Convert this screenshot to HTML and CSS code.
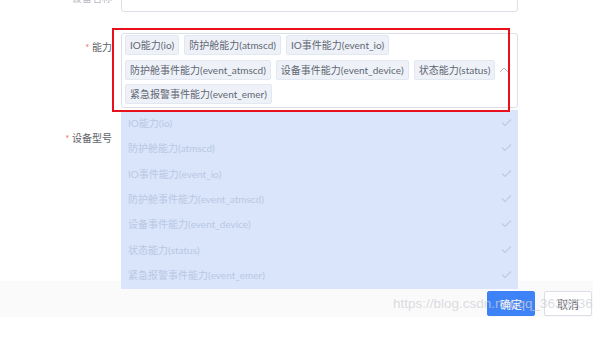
FILE: index.html
```html
<!DOCTYPE html>
<html lang="zh-CN">
<head>
  <meta charset="UTF-8" />
  <meta name="viewport" content="width=device-width, initial-scale=1.0"/>
  <title>编辑设备</title>
  <link rel="stylesheet" href="styles.css">
</head>
<body>

<div class="dialog">
  <div class="dialog-body">
    <form class="form">
      <div class="form-item first">
        <label class="form-label"><span class="req">*</span> 设备名称</label>
        <div class="form-control">
          <div class="input"></div>
        </div>
      </div>

      <div class="form-item">
        <label class="form-label"><span class="req">*</span> 能力</label>
        <div class="form-control">
          <div class="select">
            <div class="tags">
              <span class="tag">IO能力(io)</span>
              <span class="tag">防护舱能力(atmscd)</span>
              <span class="tag">IO事件能力(event_io)</span>
              <span class="tag">防护舱事件能力(event_atmscd)</span>
              <span class="tag">设备事件能力(event_device)</span>
              <span class="tag">状态能力(status)</span>
              <span class="tag">紧急报警事件能力(event_emer)</span>
            </div>
            <svg class="arrow" width="10" height="7" viewBox="0 0 10 7">
              <polyline points="1,6 5,2 9,6" fill="none" stroke="#b4b8c0" stroke-width="1"/>
            </svg>
          </div>

          <!-- dropdown popper -->
          <ul class="dropdown">
            <li>IO能力(io)<svg class="check" width="11" height="9" viewBox="0 0 11 9"><polyline points="1,4.5 4,7.5 10,1.5" fill="none" stroke="#bccae6" stroke-width="1.2"/></svg></li>
            <li>防护舱能力(atmscd)<svg class="check" width="11" height="9" viewBox="0 0 11 9"><polyline points="1,4.5 4,7.5 10,1.5" fill="none" stroke="#bccae6" stroke-width="1.2"/></svg></li>
            <li>IO事件能力(event_io)<svg class="check" width="11" height="9" viewBox="0 0 11 9"><polyline points="1,4.5 4,7.5 10,1.5" fill="none" stroke="#bccae6" stroke-width="1.2"/></svg></li>
            <li>防护舱事件能力(event_atmscd)<svg class="check" width="11" height="9" viewBox="0 0 11 9"><polyline points="1,4.5 4,7.5 10,1.5" fill="none" stroke="#bccae6" stroke-width="1.2"/></svg></li>
            <li>设备事件能力(event_device)<svg class="check" width="11" height="9" viewBox="0 0 11 9"><polyline points="1,4.5 4,7.5 10,1.5" fill="none" stroke="#bccae6" stroke-width="1.2"/></svg></li>
            <li>状态能力(status)<svg class="check" width="11" height="9" viewBox="0 0 11 9"><polyline points="1,4.5 4,7.5 10,1.5" fill="none" stroke="#bccae6" stroke-width="1.2"/></svg></li>
            <li>紧急报警事件能力(event_emer)<svg class="check" width="11" height="9" viewBox="0 0 11 9"><polyline points="1,4.5 4,7.5 10,1.5" fill="none" stroke="#bccae6" stroke-width="1.2"/></svg></li>
          </ul>
        </div>
      </div>

      <div class="form-item">
        <label class="form-label"><span class="req">*</span> 设备型号</label>
        <div class="form-control">
          <div class="input"></div>
        </div>
      </div>
    </form>
  </div>

  <div class="footer">
    <button type="button" class="btn btn-primary">确定</button>
    <button type="button" class="btn">取消</button>
  </div>

  <!-- annotation + watermark overlays -->
  <div class="mark"></div>
  <div class="watermark">https://blog.csdn.net/qq_36339368</div>
</div>

</body>
</html>
```

FILE: styles.css
```css
body {
  margin: 0;
  background: #fff;
  font-family: Lato, "Noto Sans CJK SC", sans-serif;
  overflow: hidden;
}
.dialog {
  position: relative;
  width: 593px;
  overflow: hidden;
}
/* page is scrolled: the first row is partly above the top edge */
.dialog-body {
  height: 297px;
  margin-top: -16px;
}
.form-item {
  display: flex;
  margin-bottom: 16px;
}
.form-item.first {
  margin-bottom: 21px;
}
.form-label {
  width: 121px;
  box-sizing: border-box;
  padding-right: 9px;
  text-align: right;
  line-height: 28px;
  font-size: 10px;
  color: #606266;
}
.first .form-label {
  color: #b8bbc2;
}
.req {
  color: #f56c6c;
}
.form-control {
  position: relative;
  width: 397px;
}
.input {
  height: 28px;
  box-sizing: border-box;
  border: 1px solid #dcdfe6;
  border-radius: 3px;
}
.select {
  display: flex;
  align-items: center;
  box-sizing: border-box;
  border: 1px solid #dcdfe6;
  border-radius: 3px;
  padding: 1px 8px 3px 3px;
}
.tags {
  flex: 1;
  display: flex;
  flex-wrap: wrap;
  gap: 4.5px 5px;
}
.tag {
  height: 20px;
  line-height: 18px;
  box-sizing: border-box;
  padding: 0 4px;
  background: #eef2f8;
  border: 1px solid #e2e8f2;
  border-radius: 2px;
  font-size: 10px;
  color: #5f6673;
}
.arrow {
  display: block;
}
.dropdown {
  position: absolute;
  top: calc(100% + 2px);
  left: 0;
  right: 0;
  margin: 0;
  padding: 0 0 2px;
  list-style: none;
  background: #dae5fb;
  z-index: 2;
}
.dropdown li {
  display: flex;
  align-items: center;
  justify-content: space-between;
  height: 25.3px;
  padding: 0 6px 0 7px;
  font-size: 10px;
  color: #b9c7e3;
}
.footer {
  display: flex;
  justify-content: flex-end;
  gap: 9px;
  height: 36px;
  box-sizing: border-box;
  padding: 10px 1px 1px;
  background: #fafafa;
}
.btn {
  width: 48px;
  height: 25px;
  padding: 0;
  border: 1px solid #dcdfe6;
  border-radius: 2px;
  background: #fff;
  color: #606266;
  font-family: "Noto Sans CJK SC", sans-serif;
  font-size: 11px;
}
.btn-primary {
  background: #3e82f7;
  border-color: #3e82f7;
  color: #fff;
}
.mark {
  position: absolute;
  left: 112px;
  top: 28px;
  width: 398px;
  height: 84px;
  box-sizing: border-box;
  border: 2px solid #e8111b;
  z-index: 3;
}
.watermark {
  position: absolute;
  left: 393px;
  top: 296px;
  font-family: "Liberation Sans", Arial, sans-serif;
  font-size: 13.5px;
  color: rgba(208, 208, 214, 0.75);
  z-index: 4;
}
```
